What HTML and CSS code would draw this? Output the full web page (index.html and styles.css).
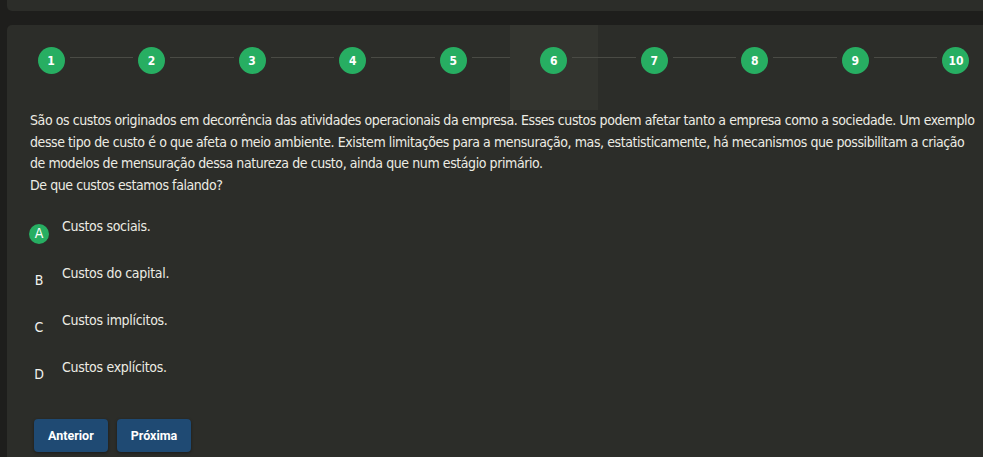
FILE: index.html
```html
<!DOCTYPE html>
<html lang="pt-BR">
<head>
<meta charset="utf-8">
<title>Questão</title>
<link rel="stylesheet" href="styles.css">
</head>
<body>
<div class="topbar"></div>
<main class="card">
  <nav class="steps">
    <div class="step"><span class="circle">1</span></div>
    <div class="step"><span class="circle">2</span></div>
    <div class="step"><span class="circle">3</span></div>
    <div class="step"><span class="circle">4</span></div>
    <div class="step"><span class="circle">5</span></div>
    <div class="step current"><span class="circle">6</span></div>
    <div class="step"><span class="circle">7</span></div>
    <div class="step"><span class="circle">8</span></div>
    <div class="step"><span class="circle">9</span></div>
    <div class="step"><span class="circle">10</span></div>
  </nav>
  <p class="question">São os custos originados em decorrência das atividades operacionais da empresa. Esses custos podem afetar tanto a empresa como a sociedade. Um exemplo desse tipo de custo é o que afeta o meio ambiente. Existem limitações para a mensuração, mas, estatisticamente, há mecanismos que possibilitam a criação de modelos de mensuração dessa natureza de custo, ainda que num estágio primário.<br>De que custos estamos falando?</p>
  <ul class="options">
    <li class="option selected"><span class="letter">A</span><span class="text">Custos sociais.</span></li>
    <li class="option"><span class="letter">B</span><span class="text">Custos do capital.</span></li>
    <li class="option"><span class="letter">C</span><span class="text">Custos implícitos.</span></li>
    <li class="option"><span class="letter">D</span><span class="text">Custos explícitos.</span></li>
  </ul>
  <div class="actions">
    <button class="btn">Anterior</button>
    <button class="btn">Próxima</button>
  </div>
</main>
</body>
</html>
```
FILE: styles.css
```css
html, body {
  margin: 0;
  padding: 0;
  background: #1e1e1c;
  overflow: hidden;
  height: 457px;
}
body {
  font-family: "DejaVu Sans Condensed", "Roboto", sans-serif;
  color: #ecece4;
}
.topbar {
  margin-left: 7px;
  width: 1000px;
  height: 11px;
  background: #2c2d29;
  border-radius: 0 0 5px 5px;
}
.card {
  margin: 14px 0 0 7px;
  width: 993px;
  height: 432px;
  background: #2c2d29;
  border-radius: 5px 5px 0 0;
  box-sizing: border-box;
}
.steps {
  display: flex;
  justify-content: space-between;
}
.step {
  position: relative;
  width: 88px;
  height: 85px;
  box-sizing: border-box;
  padding-top: 22px;
  display: flex;
  justify-content: center;
  align-items: flex-start;
}
.step.current {
  background: #33342f;
}
.step:not(:last-child)::after {
  content: "";
  position: absolute;
  left: 62.5px;
  top: 32px;
  width: 63.5px;
  height: 1px;
  background: #4a4b45;
}
.circle {
  width: 27px;
  height: 27px;
  border-radius: 50%;
  background: #27ae62;
  color: #fff;
  font-weight: bold;
  font-size: 12px;
  display: flex;
  align-items: center;
  justify-content: center;
}
.question {
  margin: 0;
  padding: 0 0 0 23px;
  width: 950px;
  font-size: 14px;
  letter-spacing: -0.42px;
  line-height: 21.5px;
}
.options {
  list-style: none;
  margin: 20px 0 0 0;
  padding: 0 0 0 22px;
}
.option {
  display: flex;
  height: 47px;
  font-size: 14px;
  letter-spacing: -0.3px;
  line-height: 21px;
}
.letter {
  width: 20px;
  height: 20px;
  margin-top: 7.5px;
  margin-right: 13px;
  border-radius: 50%;
  display: flex;
  align-items: center;
  justify-content: center;
  font-size: 14px;
  letter-spacing: 0;
  color: #f2f2ee;
}
.option.selected .letter {
  background: #27ae62;
  color: #fff;
}
.actions {
  display: flex;
  gap: 9px;
  padding: 15px 0 0 27px;
}
.btn {
  height: 33px;
  padding: 0 14px;
  border: none;
  border-radius: 4px;
  background: #1f4a73;
  color: #fff;
  font-family: "Roboto", "Liberation Sans", sans-serif;
  font-weight: bold;
  font-size: 12.5px;
  box-shadow: 0 1px 3px rgba(0,0,0,0.4);
}
```
